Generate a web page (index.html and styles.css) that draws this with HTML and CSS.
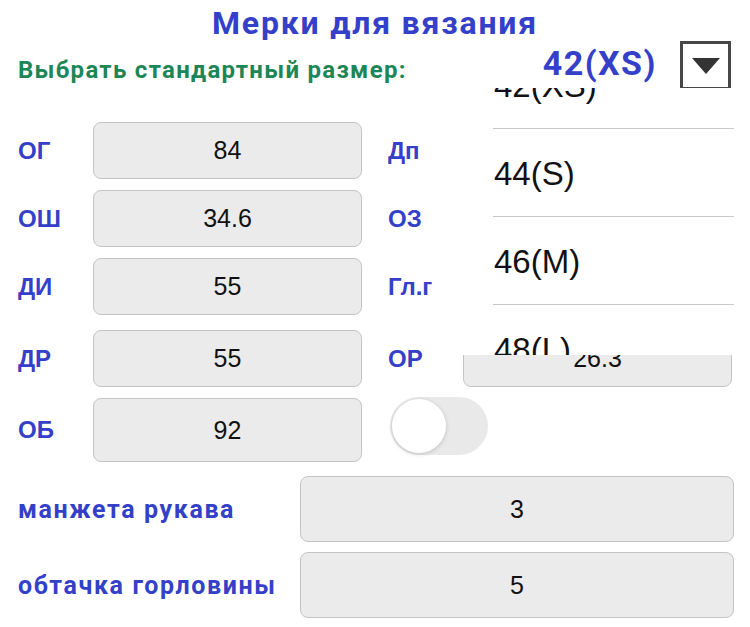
FILE: index.html
```html
<!DOCTYPE html>
<html lang="ru">
  <head>
    <meta charset="UTF-8" />
    <title>Мерки для вязания</title>
    <link rel="stylesheet" href="styles.css">
  </head>
  <body>
    <!-- заголовок -->
    <h1 class="title">Мерки для вязания</h1>

    <!-- выбор размера -->
    <div class="size-row">
      <span class="size-label">Выбрать стандартный размер:</span>
      <span class="size-value">42(XS)</span>
      <span class="drop-btn">
        <svg width="30" height="18" viewBox="0 0 30 18"><polygon points="1,1 29,1 15,17" fill="#333" /></svg>
      </span>
    </div>

    <!-- мерки -->
    <div class="fields">
      <div class="row">
        <span class="label">ОГ</span><div class="box">84</div>
        <span class="label right">Дп</span><div class="box"></div>
      </div>
      <div class="row">
        <span class="label">ОШ</span><div class="box">34.6</div>
        <span class="label right">ОЗ</span><div class="box"></div>
      </div>
      <div class="row">
        <span class="label">ДИ</span><div class="box">55</div>
        <span class="label right">Гл.г</span><div class="box"></div>
      </div>
      <div class="row row-4">
        <span class="label">ДР</span><div class="box">55</div>
        <span class="label right">ОР</span><div class="box">26.3</div>
      </div>
      <div class="row row-5">
        <span class="label">ОБ</span><div class="box tall">92</div>
        <span class="toggle"><span class="knob"></span></span>
      </div>
    </div>

    <div class="wide-rows">
      <div class="wide-row">
        <span class="wide-label">манжета рукава</span><div class="box wide">3</div>
      </div>
      <div class="wide-row">
        <span class="wide-label">обтачка горловины</span><div class="box wide">5</div>
      </div>
    </div>

    <!-- открытый список размеров -->
    <div class="picker">
      <ul class="picker-list">
        <li>42(XS)</li>
        <li>44(S)</li>
        <li>46(M)</li>
        <li>48(L)</li>
      </ul>
    </div>
  </body>
</html>
```
FILE: styles.css
```css
body {
  margin: 0;
  width: 750px;
  background: #fff;
  font-family: "Liberation Sans", Arial, sans-serif;
  position: relative;
}

/* заголовок */
.title {
  margin: 0;
  height: 40px;
  line-height: 46px;
  text-align: center;
  font-family: Roboto, sans-serif;
  font-size: 32px;
  letter-spacing: 1.8px;
  font-weight: bold;
  color: #3440c8;
}

/* строка выбора размера */
.size-row {
  display: flex;
  align-items: flex-start;
  height: 50px;
  padding: 0 19px 0 18px;
}
.size-label {
  margin-top: 17px;
  font-family: Roboto, sans-serif;
  font-size: 24px;
  letter-spacing: 1.3px;
  line-height: 26px;
  font-weight: bold;
  color: #1d8656;
  flex: 1;
}
.size-value {
  margin-top: 4px;
  font-family: Roboto, sans-serif;
  font-size: 34px;
  letter-spacing: 1.5px;
  line-height: 38px;
  font-weight: bold;
  color: #3440c8;
}
.drop-btn {
  margin-left: 23px;
  margin-top: 1px;
  width: 45px;
  height: 43px;
  border: 3px solid #474747;
  display: flex;
  align-items: center;
  justify-content: center;
}

/* поля мерок */
.fields {
  margin-top: 32px;
  padding-left: 18px;
  display: flex;
  flex-direction: column;
  gap: 11px;
}
.row {
  display: flex;
  align-items: center;
}
.row-4 {
  margin-top: 4px;
}
.label {
  width: 75px;
  font-size: 24px;
  font-weight: bold;
  color: #3440c8;
}
.label.right {
  margin-left: 26px;
}
.box {
  box-sizing: border-box;
  width: 269px;
  height: 57px;
  background: #ebebeb;
  border: 1.5px solid #c4c4c4;
  border-radius: 8px;
  display: flex;
  align-items: center;
  justify-content: center;
  font-size: 25px;
  color: #111;
}
.box.tall {
  height: 64px;
}

/* переключатель */
.toggle {
  margin-left: 28px;
  margin-top: -8px;
  width: 98px;
  height: 58px;
  border-radius: 29px;
  background: #e9e9ea;
  display: flex;
  align-items: center;
  padding-left: 2px;
  box-sizing: border-box;
}
.knob {
  width: 54px;
  height: 54px;
  border-radius: 50%;
  background: #fff;
  box-shadow: 0 1px 4px rgba(0, 0, 0, 0.18);
}

/* нижние поля */
.wide-rows {
  margin-top: 14px;
  padding: 0 16px 0 18px;
  display: flex;
  flex-direction: column;
  gap: 10px;
}
.wide-row {
  display: flex;
  align-items: center;
}
.wide-label {
  flex: 1;
  font-family: Roboto, sans-serif;
  font-size: 25px;
  letter-spacing: 1.6px;
  font-weight: bold;
  color: #3440c8;
}
.box.wide {
  width: 434px;
  height: 66px;
}

/* выпадающий список поверх полей */
.picker {
  position: absolute;
  left: 458px;
  top: 88px;
  width: 276px;
  height: 267px;
  background: #fff;
  overflow: hidden;
}
.picker-list {
  list-style: none;
  margin: -47px 0 0 35px;
  padding: 0;
}
.picker-list li {
  box-sizing: border-box;
  height: 88px;
  padding-left: 1px;
  padding-top: 2px;
  border-bottom: 1px solid #c8c8c8;
  display: flex;
  align-items: center;
  font-size: 33px;
  color: #111;
}
```
